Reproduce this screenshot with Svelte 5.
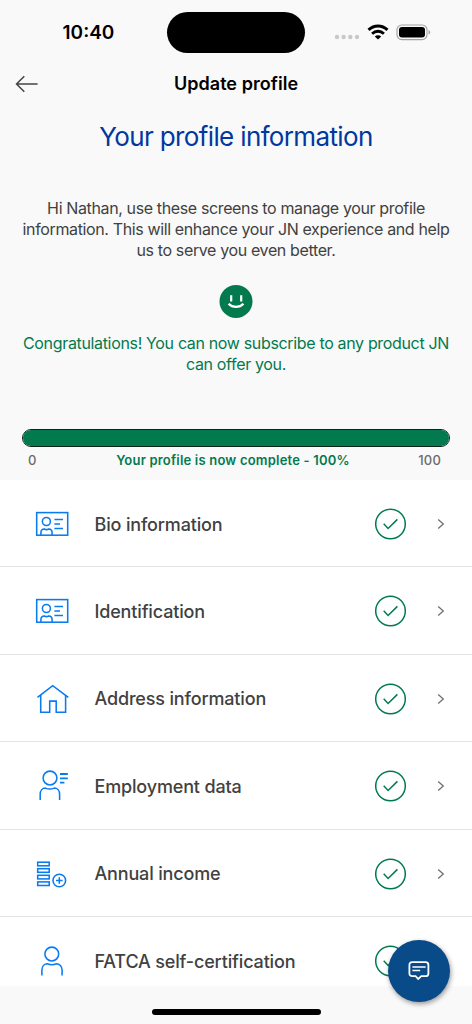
<script>
    const progress = 100;

    const sections = [
        { title: "Bio information", icon: "card" },
        { title: "Identification", icon: "card" },
        { title: "Address information", icon: "home" },
        { title: "Employment data", icon: "employment" },
        { title: "Annual income", icon: "income" },
        { title: "FATCA self-certification", icon: "person" },
    ];
</script>

<div class="screen">
    <div class="status-bar">
        <div class="time">10:40</div>
        <div class="island"></div>
        <div class="status-icons">
            <svg class="dots" width="26" height="6" viewBox="0 0 26 6" fill="#c9c9c9">
                <circle cx="3" cy="3" r="2.2" />
                <circle cx="9.6" cy="3" r="2.2" />
                <circle cx="16.3" cy="3" r="2.2" />
                <circle cx="23" cy="3" r="2.2" />
            </svg>
            <svg class="wifi" width="22" height="16" viewBox="0 0 22 16" fill="none" stroke="#000" stroke-width="2.9">
                <path d="M1.5 5.9C7 .7 15 .7 20.5 5.9" />
                <path d="M5.1 9.7C8.5 6.5 13.5 6.5 16.9 9.7" />
                <path d="M7.8 12.4C9.7 10.8 12.3 10.8 14.2 12.4L11 15.6Z" fill="#000" stroke="none" />
            </svg>
            <svg class="battery" width="36" height="17" viewBox="0 0 36 17">
                <rect x="1" y="1" width="30" height="14.6" rx="4.8" fill="none" stroke="#a3a3a3" stroke-width="1.2" />
                <rect x="3" y="3" width="26" height="10.6" rx="3" fill="#000" />
                <path d="M32.6 6v4.6c2.2-.8 2.2-3.8 0-4.6Z" fill="#a3a3a3" />
            </svg>
        </div>
    </div>

    <header class="nav">
        <button class="back" aria-label="Back">
            <svg width="24" height="18" viewBox="0 0 24 18" fill="none" stroke="#444" stroke-width="1.5">
                <path d="M22.6 9H1.5M9.3 1.2L1.5 9l7.8 7.8" />
            </svg>
        </button>
        <span class="nav-title">Update profile</span>
    </header>

    <section class="intro">
        <h1>Your profile information</h1>
        <p class="welcome">
            Hi Nathan, use these screens to manage your profile<br />
            information. This will enhance your JN experience and help<br />
            us to serve you even better.
        </p>
        <svg class="face" width="34" height="34" viewBox="0 0 34 34" fill="none">
            <circle cx="17" cy="17.4" r="16.5" fill="#027a4e" />
            <path d="M12.2 11.2v6.4M22.2 11.2v6.4" stroke="#fff" stroke-width="2.2" />
            <path d="M9.6 19.8c3.8 4.2 11 4.2 14.8 0" stroke="#fff" stroke-width="2.2" />
        </svg>
        <p class="congrats">
            Congratulations! You can now subscribe to any product JN<br />
            can offer you.
        </p>
        <div class="progress">
            <div class="progress-fill" style="width: {progress}%"></div>
        </div>
        <div class="progress-labels">
            <span>0</span>
            <b>Your profile is now complete - {progress}%</b>
            <span class="max">100</span>
        </div>
    </section>

    <main class="list">
        {#each sections as section}
            <div class="row">
                <svg class="row-icon" width="36" height="36" viewBox="0 0 36 36">
                    {#if section.icon === "card"}
                        <rect x="2.7" y="6.6" width="31" height="22.6" />
                        <circle cx="12.4" cy="15.5" r="4" />
                        <path d="M6.9 29v-2.3c0-2.2 1.5-3.8 3.5-3.8 1.3.9 2.9.9 4.2 0 2 0 3.5 1.6 3.5 3.8V29" />
                        <path d="M20.4 13.5H29M20.4 17.9H26M20.4 22.5H29" />
                    {:else if section.icon === "home"}
                        <path d="M3.5 16.3L18.7 4.7l15.6 11.6" />
                        <path d="M6.7 14v17.2h9V20.1h6.5v11.1h9.4V14" />
                    {:else if section.icon === "employment"}
                        <circle cx="16" cy="10" r="6.9" />
                        <path d="M6.2 32v-5.6c0-3.9 2.3-6.3 5.2-6.3 2.8 1.2 6.1 1.2 8.9 0 2.9 0 5.3 2.4 5.3 6.3V32" />
                        <path d="M26 6h7.8M26 10.3h7.8M26 14.6h4.4" stroke-width="1.8" />
                    {:else if section.icon === "income"}
                        <rect x="3.7" y="6.2" width="11.5" height="3.6" />
                        <rect x="3.7" y="12.7" width="11.5" height="3.6" />
                        <rect x="3.7" y="19.3" width="11.5" height="3.6" />
                        <rect x="3.7" y="25.9" width="11.5" height="3.6" />
                        <circle cx="25.3" cy="24.5" r="6.3" />
                        <path d="M25.3 21.2v6.6M22 24.5h6.6" />
                    {:else}
                        <circle cx="17.8" cy="11" r="6.9" />
                        <path d="M7.9 32.6v-5.4c0-4 2.5-6.5 5.5-6.5 2.9 1.3 6.1 1.3 9 0 3 0 5.7 2.5 5.7 6.5v5.4" />
                    {/if}
                </svg>
                <span class="row-title">{section.title}</span>
                <svg class="check" width="32" height="32" viewBox="0 0 32 32">
                    <circle cx="15.5" cy="16" r="14.8" />
                    <path d="M8.7 15.8l4.4 4.7 9.3-9.1" />
                </svg>
                <svg class="chevron" width="8" height="12" viewBox="0 0 8 12">
                    <path d="M1.2 1.4L6.3 6l-5.1 4.6" />
                </svg>
            </div>
        {/each}
    </main>

    <footer class="bottom">
        <div class="home-indicator"></div>
    </footer>

    <button class="chat" aria-label="Chat">
        <svg width="24" height="22" viewBox="0 0 24 22" fill="none" stroke="#fff">
            <path d="M5.2 2.2h13.4c1.8 0 2.8 1 2.8 2.8v8.4c0 1.8-1 2.8-2.8 2.8h-4.3L11.2 19l-2.6-2.8H5.2c-1.8 0-2.8-1-2.8-2.8V5c0-1.8 1-2.8 2.8-2.8Z" stroke-width="1.8" />
            <path d="M5.4 7h13.2M5.4 10.6h7.8" stroke-width="1.5" />
        </svg>
    </button>
</div>

<style>
    :global(body) {
        margin: 0;
        background: #f9f9f9;
    }

    .screen {
        position: relative;
        display: flex;
        flex-direction: column;
        width: 472px;
        height: 1024px;
        overflow: hidden;
        background: #f9f9f9;
        font-family: Inter, "Liberation Sans", sans-serif;
        color: #414141;
    }

    .status-bar {
        display: grid;
        grid-template-columns: 167px 138px 167px;
        height: 65px;
        padding-top: 12px;
        box-sizing: border-box;
    }

    .time {
        padding-left: 10px;
        text-align: center;
        line-height: 41px;
        font-size: 19px;
        font-weight: 600;
        color: #000;
    }

    .island {
        height: 41px;
        border-radius: 21px;
        background: #000;
    }

    .status-icons {
        display: flex;
        align-items: center;
        height: 40px;
        padding-left: 29px;
    }

    .dots {
        margin-top: 10px;
    }

    .wifi {
        margin-left: 7px;
    }

    .battery {
        margin-left: 7px;
    }

    .nav {
        display: grid;
        grid-template-columns: 52px 1fr 52px;
        align-items: center;
        height: 38px;
    }

    .back {
        padding: 0 0 0 15px;
        border: none;
        background: none;
        line-height: 0;
        text-align: left;
    }

    .nav-title {
        padding-bottom: 2px;
        text-align: center;
        font-size: 18px;
        font-weight: 600;
        letter-spacing: 0.05px;
        color: #000;
    }

    .intro {
        display: flex;
        flex-direction: column;
        align-items: center;
        height: 377px;
        padding: 0 22px;
        box-sizing: border-box;
        white-space: nowrap;
    }

    h1 {
        margin: 16px 0 0;
        font-size: 26px;
        line-height: 36px;
        font-weight: 400;
        letter-spacing: -0.64px;
        color: #0038a0;
    }

    p {
        margin: 0;
        text-align: center;
        font-size: 16px;
        line-height: 21px;
        letter-spacing: -0.37px;
    }

    .welcome {
        margin-top: 43px;
    }

    .face {
        margin-top: 23px;
        overflow: visible;
    }

    .congrats {
        margin-top: 15px;
        letter-spacing: -0.34px;
        color: #027a4e;
    }

    .progress {
        width: 428px;
        height: 18px;
        margin-top: 54px;
        box-sizing: border-box;
        border: 1px solid #10231b;
        border-radius: 9px;
        overflow: hidden;
        flex-shrink: 0;
    }

    .progress-fill {
        height: 100%;
        background: #027a4e;
    }

    .progress-labels {
        display: grid;
        grid-template-columns: 47px 1fr 50px;
        width: 413px;
        margin: 4px 3px 0 0;
        line-height: 18px;
        font-size: 13px;
        font-weight: 500;
        letter-spacing: 0.2px;
        color: #6b6b6b;
    }

    .progress-labels b {
        text-align: center;
        font-weight: 600;
        color: #027a4e;
    }

    .max {
        text-align: right;
    }

    .list {
        height: 506px;
        overflow: hidden;
        background: #fff;
    }

    .row {
        display: flex;
        align-items: center;
        height: 87.5px;
        padding: 2px 27px 0 34px;
        box-sizing: border-box;
        border-bottom: 1px solid #e1e5e4;
    }

    .row:first-child {
        height: 87px;
    }

    .row-icon {
        fill: none;
        stroke: #087bf0;
        stroke-width: 1.55;
    }

    .row-title {
        flex: 1;
        padding-left: 24.5px;
        font-size: 18px;
        font-weight: 450;
        letter-spacing: -0.16px;
        white-space: nowrap;
    }

    .check {
        fill: none;
        stroke: #027a4e;
        stroke-width: 1.5;
    }

    .chevron {
        margin-left: 30px;
        fill: none;
        stroke: #707070;
        stroke-width: 1.3;
    }

    .bottom {
        display: flex;
        justify-content: center;
        height: 38px;
        padding-top: 23px;
        box-sizing: border-box;
    }

    .home-indicator {
        width: 169px;
        height: 6px;
        border-radius: 3px;
        background: #000;
    }

    /* floats above the list */
    .chat {
        position: absolute;
        right: 22px;
        bottom: 22px;
        display: flex;
        align-items: center;
        justify-content: center;
        width: 62px;
        height: 62px;
        padding: 0;
        border: none;
        border-radius: 50%;
        background: #084b88;
        box-shadow: 1px 2px 5px rgba(0, 0, 0, 0.4);
    }
</style>
